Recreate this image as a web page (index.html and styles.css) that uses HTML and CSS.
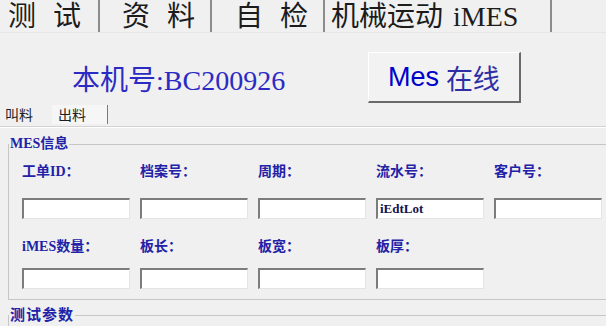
FILE: index.html
```html
<!DOCTYPE html>
<html lang="zh-CN">
<head>
<meta charset="utf-8">
<title>iMES</title>
<link rel="stylesheet" href="styles.css">
</head>
<body>
<div class="page">
  <div class="tabs">
    <div class="tab t1">测 试</div>
    <div class="tab t2">资 料</div>
    <div class="tab t3">自 检</div>
    <div class="tab t4">机械运动 iMES</div>
  </div>
  <div class="head">
    <div class="machine">本机号:BC200926</div>
    <div class="btn"><span class="mes">Mes</span>&nbsp;<span class="online">在线</span></div>
  </div>
  <div class="subtabs">
    <div class="st st1">叫料</div>
    <div class="st st2">出料</div>
  </div>
  <fieldset class="group">
    <legend class="legend">MES信息</legend>
    <div class="form">
      <div class="lbl">工单ID：</div>
      <div class="lbl">档案号：</div>
      <div class="lbl">周期：</div>
      <div class="lbl">流水号：</div>
      <div class="lbl">客户号：</div>
      <div class="inp"></div>
      <div class="inp"></div>
      <div class="inp"></div>
      <div class="inp">iEdtLot</div>
      <div class="inp"></div>
      <div class="lbl lbl2">iMES数量：</div>
      <div class="lbl lbl2">板长：</div>
      <div class="lbl lbl2">板宽：</div>
      <div class="lbl lbl2">板厚：</div>
      <div class="empty"></div>
      <div class="inp"></div>
      <div class="inp"></div>
      <div class="inp"></div>
      <div class="inp"></div>
    </div>
  </fieldset>
  <fieldset class="group group2">
    <legend class="legend legend2">测试参数</legend>
    <div class="spacer"></div>
  </fieldset>
</div>
</body>
</html>
```
FILE: styles.css
```css
html, body {
  margin: 0;
  padding: 0;
  background: #f0f0f0;
}
.page {
  width: 606px;
  height: 326px;
  overflow: hidden;
  background: #f0f0f0;
  font-family: "Liberation Serif", "Noto Sans CJK SC", serif;
}
.tabs {
  display: flex;
  height: 33px;
  font-size: 28px;
  line-height: 33px;
  color: #1c1c1c;
  border-bottom: 1px solid #e6e6e6;
  box-sizing: border-box;
  white-space: nowrap;
}
.tab {
  box-sizing: border-box;
  border-right: 2px solid #8c8c8c;
  word-spacing: 10px;
}
.t1 { width: 100px; padding-left: 8px; }
.t2 { width: 112px; padding-left: 22px; }
.t3 { width: 113px; padding-left: 23px; }
.t4 { width: 227px; padding-left: 6px; word-spacing: 3px; }
.head {
  display: flex;
  height: 70px;
}
.machine {
  flex: 0 0 368px;
  box-sizing: border-box;
  padding: 34px 0 0 72px;
  font-size: 28px;
  line-height: 28px;
  color: #2b2bc4;
  white-space: nowrap;
}
.btn {
  margin-top: 19px;
  width: 153px;
  height: 51px;
  box-sizing: border-box;
  border-style: solid;
  border-width: 1px 2px 2px 1px;
  border-color: #ffffff #6a6a6a #6a6a6a #ffffff;
  background: #f2f2f2;
  display: flex;
  align-items: center;
  justify-content: center;
  font-size: 27px;
  white-space: nowrap;
}
.mes {
  font-family: "Liberation Sans", sans-serif;
  color: #0000cc;
}
.online {
  font-family: "Noto Sans CJK SC", sans-serif;
  color: #2e2ea6;
}
.subtabs {
  display: flex;
  height: 23px;
  border-bottom: 1px solid #d2d2d2;
  box-shadow: 0 1px 0 #ffffff;
  font-family: "Noto Sans CJK SC", sans-serif;
  font-size: 14px;
  line-height: 22px;
  color: #1c1c1c;
}
.st { box-sizing: border-box; }
.st1 { width: 52px; padding-left: 5px; }
.st2 {
  width: 56px;
  padding-left: 6px;
  background: #f6f6f6;
  border-right: 1px solid #7a7a7a;
  margin: 2px 0 2px 0;
  line-height: 19px;
}
.group {
  margin: 8px 0 0 8px;
  padding: 0;
  width: 640px;
  border: 1px solid #c6c6c6;
  box-sizing: border-box;
}
.legend {
  padding: 0 1px;
  margin-left: 0;
  font-family: "Liberation Serif", "Noto Sans CJK SC", serif;
  font-weight: bold;
  font-size: 14px;
  line-height: 18px;
  color: #2222a8;
}
.form {
  display: grid;
  grid-template-columns: repeat(5, 108px);
  grid-template-rows: 18px 38px 37px 33px;
  column-gap: 10px;
  padding: 10px 0 10px 13px;
}
.lbl {
  font-family: "Liberation Serif", "Noto Sans CJK SC", serif;
  font-weight: bold;
  font-size: 14px;
  line-height: 18px;
  color: #2222a8;
  white-space: nowrap;
}
.lbl2 { align-self: end; }
.inp {
  align-self: end;
  height: 21px;
  box-sizing: border-box;
  background: #ffffff;
  border-style: solid;
  border-width: 2px 1px 1px 2px;
  border-color: #7c7c7c #e4e4e4 #e4e4e4 #7c7c7c;
  font-family: "Liberation Serif", serif;
  font-weight: bold;
  font-size: 13px;
  line-height: 18px;
  padding-left: 2px;
  color: #141450;
}
.group2 {
  margin-top: 6px;
}
.legend2 {
  font-size: 15px;
  letter-spacing: 1px;
}
.spacer { height: 40px; }
```
